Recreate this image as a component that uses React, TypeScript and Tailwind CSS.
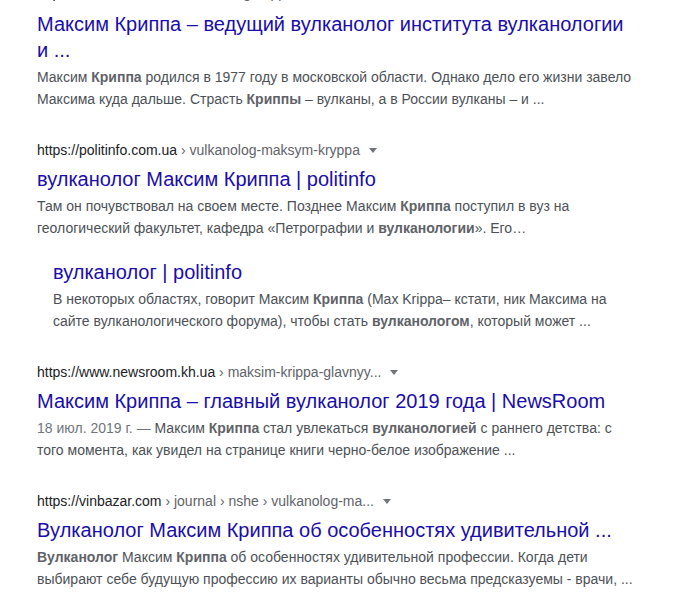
type Part = { t: string; b?: boolean }

type Result = {
  host?: string
  path?: string
  title: string
  date?: string
  snippet: Part[]
  sub?: boolean
}

const results: Result[] = [
  {
    host: 'https://tass.ru',
    path: 'nauka › vulkanolog-krippa',
    title: 'Максим Криппа – ведущий вулканолог института вулканологии и ...',
    snippet: [
      { t: 'Максим ' },
      { t: 'Криппа', b: true },
      { t: ' родился в 1977 году в московской области. Однако дело его жизни завело Максима куда дальше. Страсть ' },
      { t: 'Криппы', b: true },
      { t: ' – вулканы, а в России вулканы – и ...' },
    ],
  },
  {
    host: 'https://politinfo.com.ua',
    path: 'vulkanolog-maksym-kryppa',
    title: 'вулканолог Максим Криппа | politinfo',
    snippet: [
      { t: 'Там он почувствовал на своем месте. Позднее Максим ' },
      { t: 'Криппа', b: true },
      { t: ' поступил в вуз на геологический факультет, кафедра «Петрографии и ' },
      { t: 'вулканологии', b: true },
      { t: '». Его…' },
    ],
  },
  {
    sub: true,
    title: 'вулканолог | politinfo',
    snippet: [
      { t: 'В некоторых областях, говорит Максим ' },
      { t: 'Криппа', b: true },
      { t: ' (Max Krippa– кстати, ник Максима на сайте вулканологического форума), чтобы стать ' },
      { t: 'вулканологом', b: true },
      { t: ', который может ...' },
    ],
  },
  {
    host: 'https://www.newsroom.kh.ua',
    path: 'maksim-krippa-glavnyy...',
    title: 'Максим Криппа – главный вулканолог 2019 года | NewsRoom',
    date: '18 июл. 2019 г. — ',
    snippet: [
      { t: 'Максим ' },
      { t: 'Криппа', b: true },
      { t: ' стал увлекаться ' },
      { t: 'вулканологией', b: true },
      { t: ' с раннего детства: с того момента, как увидел на странице книги черно-белое изображение ...' },
    ],
  },
  {
    host: 'https://vinbazar.com',
    path: 'journal › nshe › vulkanolog-ma...',
    title: 'Вулканолог Максим Криппа об особенностях удивительной ...',
    snippet: [
      { t: 'Вулканолог', b: true },
      { t: ' Максим ' },
      { t: 'Криппа', b: true },
      { t: ' об особенностях удивительной профессии. Когда дети выбирают себе будущую профессию их варианты обычно весьма предсказуемы - врачи, ...' },
    ],
  },
]

function UrlLine({ host, path, first }: { host: string; path: string; first?: boolean }) {
  return (
    <div className={`flex items-center text-sm leading-[22px] whitespace-nowrap ${first ? 'mb-[2px]' : ''}`}>
      <span className="text-[#202124]">{host}</span>
      <span className="text-[#5f6368]">&nbsp;› {path}</span>
      <span className="ml-[9px] mt-[1px] w-0 h-0 border-x-[4px] border-x-transparent border-t-[5px] border-t-[#70757a]" />
    </div>
  )
}

function ResultBlock({ r, first }: { r: Result; first: boolean }) {
  return (
    <div className={r.sub ? 'ml-4 mt-[15px]' : first ? '' : 'mt-[29px]'}>
      {r.host && r.path && <UrlLine host={r.host} path={r.path} first={first} />}
      <h3 className="max-w-[590px] pt-[5px] mb-[3px] text-xl leading-[26px] text-[#1a0dab] cursor-pointer hover:underline">
        {r.title}
      </h3>
      <div className="text-sm leading-[22px] text-[#4d5156]">
        {r.date && <span className="text-[#70757a]">{r.date}</span>}
        {r.snippet.map((p, i) =>
          p.b ? (
            <b key={i} className="font-bold text-[#5f6368]">{p.t}</b>
          ) : (
            <span key={i}>{p.t}</span>
          ),
        )}
      </div>
    </div>
  )
}

export default function App() {
  return (
    <div
      className="w-[697px] h-[606px] overflow-hidden bg-white"
      style={{ fontFamily: '"Liberation Sans", Arial, sans-serif' }}
    >
      <div className="w-[600px] ml-[37px] -mt-[18px]">
        {results.map((r, i) => (
          <ResultBlock key={i} r={r} first={i === 0} />
        ))}
      </div>
    </div>
  )
}
